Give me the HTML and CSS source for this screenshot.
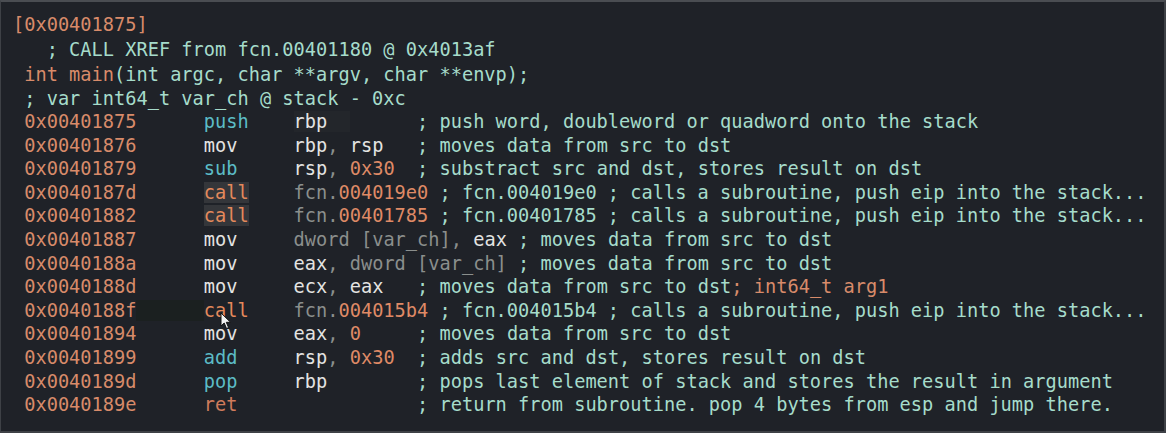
FILE: index.html
```html
<!DOCTYPE html>
<html>
<head>
<meta charset="utf-8">
<link rel="stylesheet" href="styles.css">
</head>
<body>
<div class="term">
  <div class="head">
    <div class="ln"><span class="o">[0x00401875]</span></div>
    <div class="ln"><span class="c">   ; CALL XREF from fcn.00401180 @ 0x4013af</span></div>
    <div class="ln"> <span class="o">int main</span><span class="c">(int argc, char **argv, char **envp);</span></div>
    <div class="ln short"><span class="c"> ; var int64_t var_ch @ stack - 0xc</span></div>
  </div>
  <div class="rows">
    <div class="row"> <span class="a">0x00401875</span>      <span class="op-b">push</span>    <span class="hl"><span class="w">rbp</span>  </span>      <span class="c">; push word, doubleword or quadword onto the stack</span></div>
    <div class="row"> <span class="a">0x00401876</span>      <span class="w">mov</span>     <span class="w">rbp</span><span class="g">,</span> <span class="w">rsp</span>   <span class="c">; moves data from src to dst</span></div>
    <div class="row"> <span class="a">0x00401879</span>      <span class="op-b">sub</span>     <span class="w">rsp</span><span class="g">,</span> <span class="n">0x30</span>  <span class="c">; substract src and dst, stores result on dst</span></div>
    <div class="row"> <span class="a">0x0040187d</span>      <span class="call">call</span>    <span class="g">fcn.</span><span class="n">004019e0</span> <span class="c">; fcn.004019e0 ; calls a subroutine, push eip into the stack...</span></div>
    <div class="row"> <span class="a">0x00401882</span>      <span class="call">call</span>    <span class="g">fcn.</span><span class="n">00401785</span> <span class="c">; fcn.00401785 ; calls a subroutine, push eip into the stack...</span></div>
    <div class="row"> <span class="a">0x00401887</span>      <span class="w">mov</span>     <span class="g">dword [var_ch]</span><span class="g">,</span> <span class="w">eax</span> <span class="c">; moves data from src to dst</span></div>
    <div class="row"> <span class="a">0x0040188a</span>      <span class="w">mov</span>     <span class="w">eax</span><span class="g">, dword [var_ch]</span> <span class="c">; moves data from src to dst</span></div>
    <div class="row"> <span class="a">0x0040188d</span>      <span class="w">mov</span>     <span class="w">ecx</span><span class="g">,</span> <span class="w">eax</span>   <span class="c">; moves data from src to dst</span><span class="o">; int64_t arg1</span></div>
    <div class="row"> <span class="a">0x0040188f</span><span class="band">      </span><span class="call2">call</span>    <span class="g">fcn.</span><span class="n">004015b4</span> <span class="c">; fcn.004015b4 ; calls a subroutine, push eip into the stack...</span></div>
    <div class="row"> <span class="a">0x00401894</span>      <span class="w">mov</span>     <span class="w">eax</span><span class="g">,</span> <span class="n">0</span>     <span class="c">; moves data from src to dst</span></div>
    <div class="row"> <span class="a">0x00401899</span>      <span class="op-b">add</span>     <span class="w">rsp</span><span class="g">,</span> <span class="n">0x30</span>  <span class="c">; adds src and dst, stores result on dst</span></div>
    <div class="row"> <span class="a">0x0040189d</span>      <span class="op-b">pop</span>     <span class="w">rbp</span>        <span class="c">; pops last element of stack and stores the result in argument</span></div>
    <div class="row"> <span class="a">0x0040189e</span>      <span class="ret">ret</span>                <span class="c">; return from subroutine. pop 4 bytes from esp and jump there.</span></div>
  </div>
  <svg class="cursor" width="12" height="18" viewBox="0 0 12 18"><path d="M1 1 L1 14 L4.2 11 L6.5 16.5 L8.6 15.6 L6.3 10.3 L10.6 10.3 Z" fill="#f2f2f2" stroke="#111" stroke-width="1"/></svg>
</div>
</body>
</html>
```
FILE: styles.css
```css
html, body {
  margin: 0;
  padding: 0;
  background: #1f2228;
}
body {
  width: 1166px;
  height: 433px;
  overflow: hidden;
}
.term {
  position: relative;
  box-sizing: border-box;
  width: 1166px;
  height: 433px;
  background: #1f2228;
  border-top: 2px solid #4a4d52;
  border-left: 1px solid #3e4146;
  border-right: 2px solid #3e4146;
  border-bottom: 2px solid #3e4146;
  padding: 10px 0 0 12px;
  font-family: "DejaVu Sans Mono", monospace;
  font-size: 18.65px;
  color: #a6dccb;
}
.ln, .row {
  white-space: pre;
}
.ln { height: 25px; line-height: 25px; }
.ln.short { height: 23px; line-height: 23px; }
.row { height: 23.6px; line-height: 23.6px; }
.o { color: #d88b6a; }
.c { color: #a6dccb; }
.a { color: #d88b6a; }
.op-b { color: #5cbcc6; }
.w { color: #e4e4e2; }
.g { color: #8b8f8d; }
.n { color: #df8a66; }
.call { color: #e58a5c; background: #34363a; }
.call2 { color: #e58a5c; }
.ret { color: #cf7b5c; }
.hl { background: #23262b; }
.band { background: #1b2020; }
.cursor {
  position: absolute;
  left: 219px;
  top: 310px;
}
```
